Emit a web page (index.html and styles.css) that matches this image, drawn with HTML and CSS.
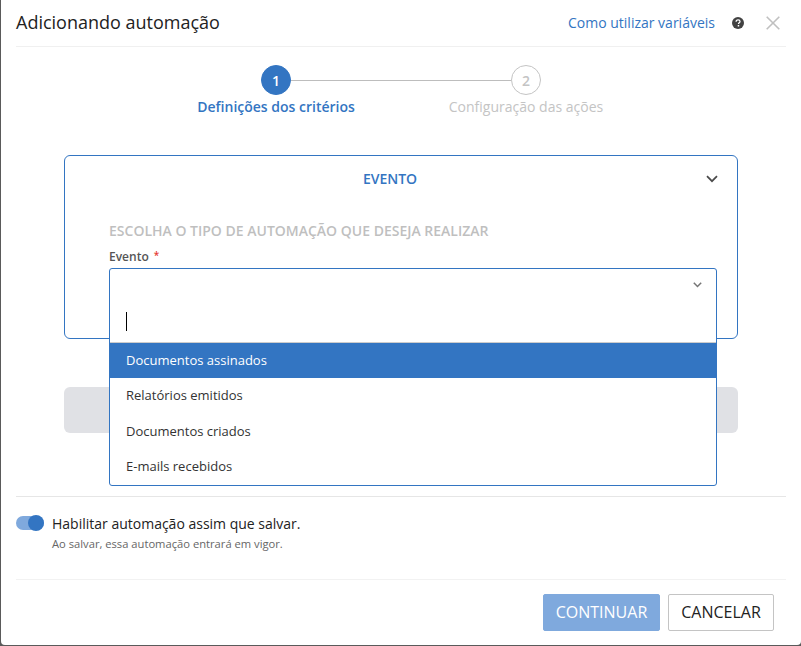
FILE: index.html
```html
<!DOCTYPE html>
<html lang="pt-BR">
<head>
<meta charset="utf-8">
<title>Adicionando automação</title>
<link rel="stylesheet" href="styles.css">
</head>
<body>
<div class="modal">
  <header class="head">
    <h1 class="title">Adicionando automação</h1>
    <a class="help-link">Como utilizar variáveis</a>
    <svg class="help-icon" width="12" height="12" viewBox="0 0 12 12"><circle cx="6" cy="6" r="6" fill="#424242"/><path d="M4.1 4.7c0-1.2.9-1.9 2-1.9s1.9.7 1.9 1.6c0 1.4-1.5 1.3-1.5 2.5" fill="none" stroke="#fff" stroke-width="1.3"/><rect x="5.7" y="8" width="1.5" height="1.5" fill="#fff"/></svg>
    <svg class="close-icon" width="14" height="14" viewBox="0 0 14 14"><path d="M.7.7l12.6 12.6M13.3.7L.7 13.3" stroke="#c0c0c0" stroke-width="1.6" fill="none"/></svg>
  </header>

  <div class="stepper">
    <div class="step active">
      <div class="bubble">1</div>
      <div class="step-label">Definições dos critérios</div>
    </div>
    <div class="step-line"></div>
    <div class="step">
      <div class="bubble">2</div>
      <div class="step-label">Configuração das ações</div>
    </div>
  </div>

  <section class="card">
    <div class="card-title">EVENTO
      <svg class="card-chevron" width="12" height="8" viewBox="0 0 12 8"><path d="M1 1.2l5 5 5-5" fill="none" stroke="#4a4a4a" stroke-width="1.7"/></svg>
    </div>
    <div class="card-sub">ESCOLHA O TIPO DE AUTOMAÇÃO QUE DESEJA REALIZAR</div>
    <label class="field-label">Evento<span class="req">*</span></label>
    <div class="select-anchor">
      <div class="select">
        <div class="select-top">
          <svg width="9" height="6" viewBox="0 0 9 6"><path d="M.8.8l3.7 3.7L8.2.8" fill="none" stroke="#757575" stroke-width="1.5"/></svg>
        </div>
        <div class="search"><span class="caret"></span></div>
        <ul class="options">
          <li class="option selected">Documentos assinados</li>
          <li class="option">Relatórios emitidos</li>
          <li class="option">Documentos criados</li>
          <li class="option">E-mails recebidos</li>
        </ul>
      </div>
    </div>
  </section>

  <div class="grey-bar"></div>

  <div class="toggle-row">
    <span class="toggle"><span class="knob"></span></span>
    <div>
      <div class="toggle-title">Habilitar automação assim que salvar.</div>
      <div class="toggle-sub">Ao salvar, essa automação entrará em vigor.</div>
    </div>
  </div>

  <footer class="foot">
    <button class="btn primary">CONTINUAR</button>
    <button class="btn">CANCELAR</button>
  </footer>
</div>
</body>
</html>
```
FILE: styles.css
```css
* { box-sizing: border-box; }
html, body { margin: 0; height: 100%; background: #5a5a5a; overflow: hidden; }
body { font-family: "Open Sans", "Noto Sans", sans-serif; color: #222; }
.modal { width: 800px; height: 645px; margin-left: 1px; background: #fff; border-radius: 0 0 4px 4px; padding: 0 15px; display: flex; flex-direction: column; }
.head { height: 47px; flex: none; display: flex; align-items: center; border-bottom: 1px solid #f0f0f0; }
.title { flex: 1; margin: 0 0 2px; font-size: 18px; font-weight: 400; color: #222; }
.help-link { margin-bottom: 2px; font-size: 14px; color: #3375c2; }
.help-icon { margin-left: 17px; }
.close-icon { margin-left: 22px; margin-right: 6px; }
.stepper { height: 108px; flex: none; display: flex; justify-content: center; padding-top: 18px; }
.step { width: 30px; display: flex; flex-direction: column; align-items: center; position: relative; }
.step-line { width: 220px; height: 1px; margin-top: 15px; background: #bdbdbd; }
.bubble { width: 30px; height: 30px; flex: none; border-radius: 50%; border: 1px solid #c4c4c4; color: #c4c4c4; font-size: 14px; font-weight: 600; display: flex; align-items: center; justify-content: center; }
.active .bubble { background: #3375c2; border-color: #3375c2; color: #fff; }
.step-label { margin-top: 2px; font-size: 14px; font-weight: 400; line-height: 20px; white-space: nowrap; color: #c4c4c4; }
.active .step-label { color: #3375c2; font-weight: 600; }
.card { width: 674px; height: 184px; flex: none; margin-left: 48px; border: 1px solid #3375c2; border-radius: 6px; padding: 0 20px 0 44px; }
.card-title { position: relative; height: 48px; margin-left: -44px; margin-right: -20px; padding: 13px 22px 0 0; text-align: center; font-size: 14px; font-weight: 600; line-height: 20px; color: #3375c2; }
.card-chevron { position: absolute; right: 19px; top: 19px; }
.card-sub { margin-top: 17px; font-size: 14px; font-weight: 600; line-height: 20px; color: #bfbfbf; }
.field-label { display: block; margin-top: 8px; font-size: 12px; font-weight: 600; line-height: 16px; color: #555; }
.req { margin-left: 5px; position: relative; top: -2px; font-size: 10px; color: #e53935; }
.select-anchor { position: relative; margin-top: 3px; }
.select { position: absolute; top: 0; left: 0; width: 608px; height: 218px; background: #fff; border: 1px solid #3375c2; border-radius: 3px; }
.select-top { height: 31px; display: flex; justify-content: flex-end; align-items: flex-start; padding: 13px 14px 0 0; }
.search { height: 43px; padding: 9px 16px 0; border-bottom: 1px solid #ccc; }
.caret { display: block; width: 1px; height: 19px; margin-top: 3px; background: #000; }
.options { margin: 0; padding: 0; list-style: none; }
.option { height: 35.3px; padding: 0 0 1px 16px; display: flex; align-items: center; font-size: 13px; color: #333; }
.option.selected { background: #3375c2; color: #fff; }
.grey-bar { width: 674px; height: 46px; flex: none; margin: 48px 0 0 48px; background: #e0e1e5; border-radius: 6px; }
.toggle-row { margin-top: 63px; height: 84px; flex: none; border-top: 1px solid #e6e6e6; border-bottom: 1px solid #f2f2f2; display: flex; align-items: flex-start; gap: 8px; padding-top: 19px; }
.toggle { position: relative; width: 28px; height: 14px; background: #7fa9dd; border-radius: 7px; flex: none; }
.knob { position: absolute; right: 0; top: -1px; width: 16px; height: 16px; border-radius: 50%; background: #3375c2; }
.toggle-title { font-size: 14px; line-height: 16px; color: #222; }
.toggle-sub { margin-top: 5px; font-size: 11.2px; line-height: 14px; color: #666; }
.foot { display: flex; justify-content: flex-end; gap: 8px; padding: 14px 12px 0 0; }
.btn { width: 106px; height: 37px; padding: 0 0 2px; background: #fff; border: 1px solid #c4c4c4; border-radius: 2px; font-family: inherit; font-size: 16px; color: #222; }
.btn.primary { width: 117px; background: #7fa9dd; border-color: #7fa9dd; color: #fff; }
```
